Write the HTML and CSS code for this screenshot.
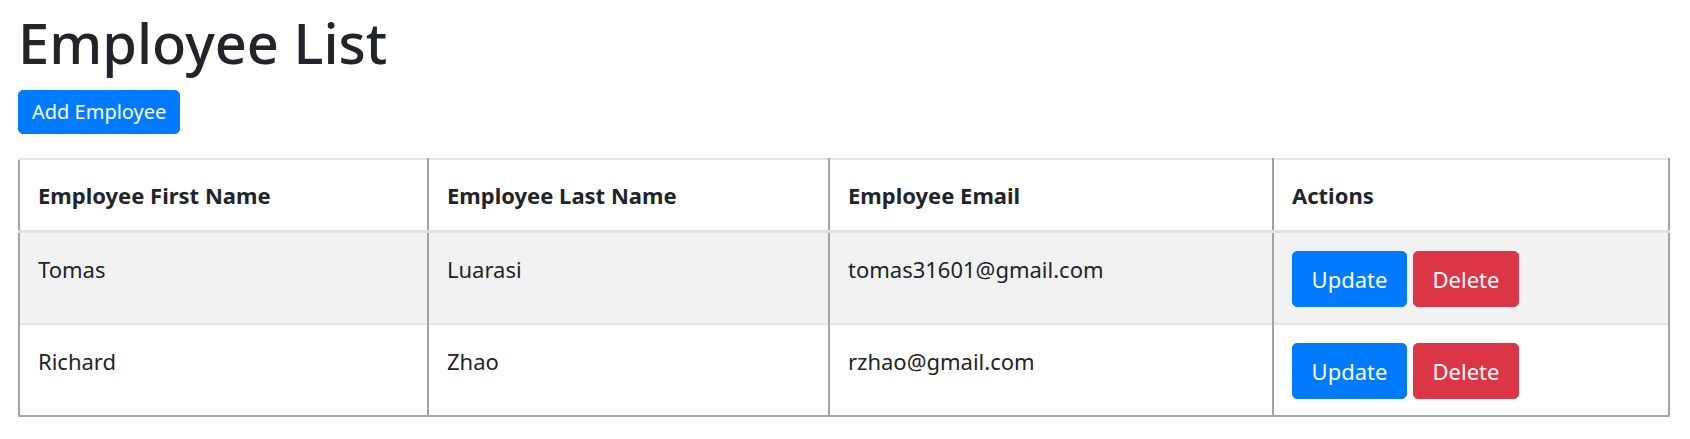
FILE: index.html
```html
<!DOCTYPE html>
<html lang="en">
<head>
<meta charset="utf-8">
<title>Employee List</title>
<link rel="stylesheet" href="styles.css">
</head>
<body>
<div class="container">
  <h1 class="title">Employee List</h1>
  <div class="toolbar">
    <button class="btn btn-primary btn-sm">Add Employee</button>
  </div>
  <table class="table">
    <colgroup>
      <col class="c1"><col class="c2"><col class="c3"><col class="c4">
    </colgroup>
    <thead>
      <tr>
        <th>Employee First Name</th>
        <th>Employee Last Name</th>
        <th>Employee Email</th>
        <th>Actions</th>
      </tr>
    </thead>
    <tbody>
      <tr class="striped">
        <td>Tomas</td>
        <td>Luarasi</td>
        <td>tomas31601@gmail.com</td>
        <td><div class="actions"><button class="btn btn-primary">Update</button><button class="btn btn-danger">Delete</button></div></td>
      </tr>
      <tr>
        <td>Richard</td>
        <td>Zhao</td>
        <td>rzhao@gmail.com</td>
        <td><div class="actions"><button class="btn btn-primary">Update</button><button class="btn btn-danger">Delete</button></div></td>
      </tr>
    </tbody>
  </table>
</div>
</body>
</html>
```
FILE: styles.css
```css
html, body {
  margin: 0;
  padding: 0;
  background: #fff;
}
body {
  font-family: "Noto Sans", "Open Sans", sans-serif;
  color: #212529;
}
.container {
  padding: 6px 22px 0 18px;
}
.title {
  margin: 0 0 12px 0;
  font-size: 56px;
  line-height: 72px;
  font-weight: 500;
  color: #212529;
}
.toolbar {
  margin-bottom: 24px;
  display: flex;
}
.btn {
  font-family: inherit;
  border: 1px solid transparent;
  border-radius: 5px;
  color: #fff;
  cursor: pointer;
  white-space: nowrap;
}
.btn-primary {
  background: #007bff;
  border-color: #007bff;
}
.btn-danger {
  background: #dc3545;
  border-color: #dc3545;
}
.btn-sm {
  font-size: 20px;
  line-height: 30px;
  padding: 6px 13px;
  height: 44px;
}
.table {
  border-collapse: collapse;
  table-layout: fixed;
  width: 1650px;
  font-size: 22px;
}
.c1 { width: 409px; }
.c2 { width: 401px; }
.c3 { width: 444px; }
.c4 { width: 396px; }
.table th, .table td {
  text-align: left;
  vertical-align: top;
  padding: 18px 18px 17px 18px;
  line-height: 36px;
  border-left: 2px solid #a3a3a3;
  border-right: 2px solid #a3a3a3;
  border-top: 2px solid #e2e4e6;
}
.table td {
  padding-bottom: 16px;
}
.table th {
  font-weight: 700;
  border-bottom: 3px solid #dee2e6;
  padding-top: 17px;
}
.table tbody tr:last-child td {
  border-bottom: 2px solid #a8a8a8;
}
.striped td {
  background: #f2f2f2;
}
.actions {
  display: flex;
  gap: 6px;
}
.actions .btn {
  font-size: 22px;
  line-height: 36px;
  padding: 9px 18px;
  height: 56px;
}
.actions .btn-primary { width: 115px; }
.actions .btn-danger { width: 106px; }
```
